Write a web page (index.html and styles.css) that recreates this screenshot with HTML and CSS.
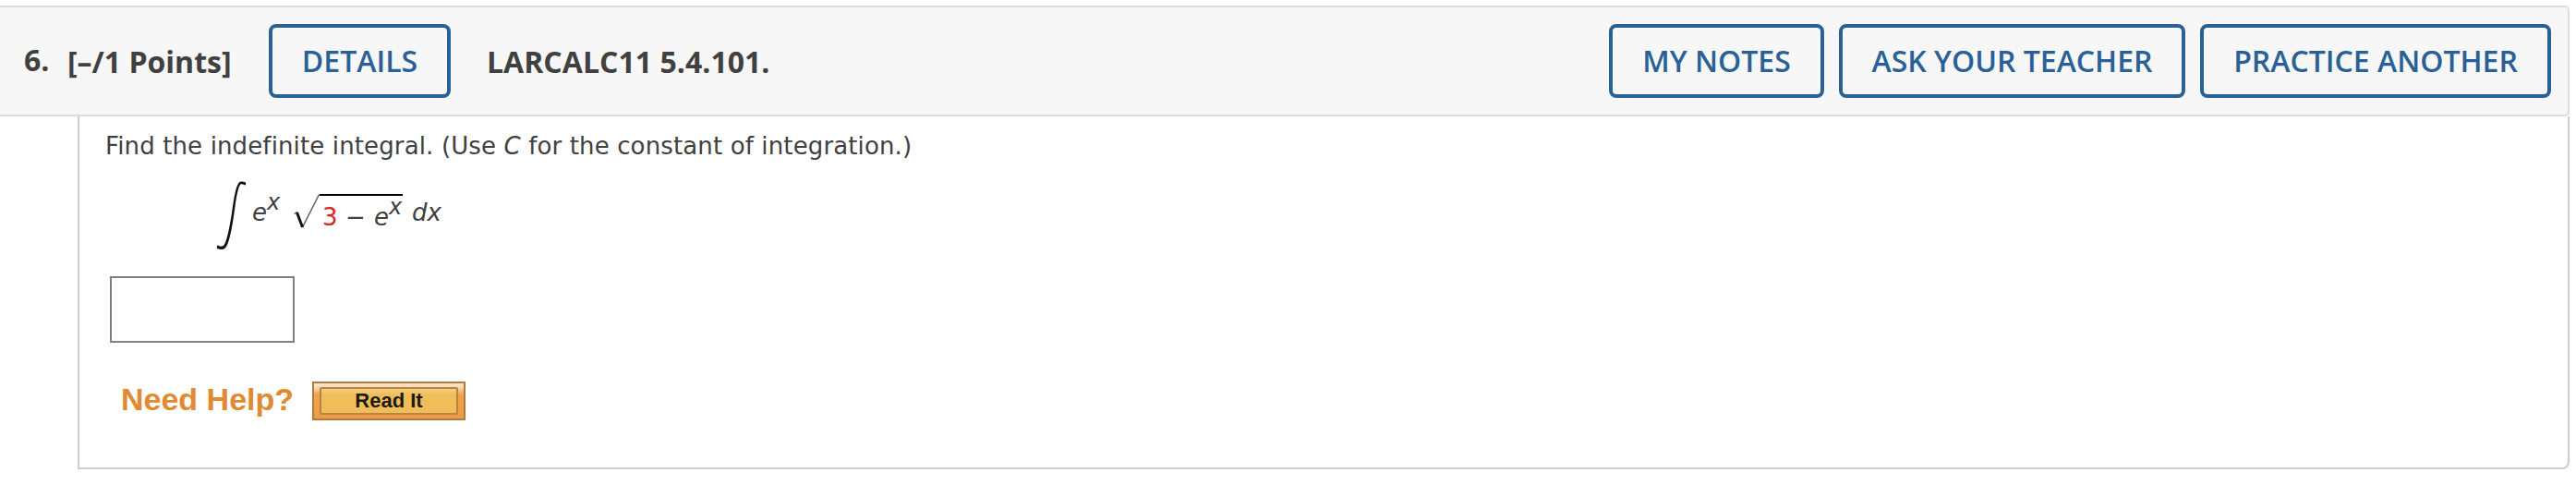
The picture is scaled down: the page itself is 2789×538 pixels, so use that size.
FILE: index.html
```html
<!DOCTYPE html>
<html lang="en">
<head>
<meta charset="utf-8">
<title>LARCALC11 5.4.101</title>
<link rel="stylesheet" href="styles.css">
</head>
<body>
<section class="question">
  <header class="question-header">
    <span class="number">6.</span>
    <span class="points">[–/1 Points]</span>
    <button class="btn details">DETAILS</button>
    <span class="source">LARCALC11 5.4.101.</span>
    <nav class="actions">
      <button class="btn notes">MY NOTES</button>
      <button class="btn ask">ASK YOUR TEACHER</button>
      <button class="btn practice">PRACTICE ANOTHER</button>
    </nav>
  </header>
  <main class="question-body">
    <p class="prompt">Find the indefinite integral. (Use <i>C</i> for the constant of integration.)</p>
    <div class="formula">
      <svg class="integral" viewBox="0 0 31 74" aria-label="integral"><path d="M31 1.5C28 .2 25 0 23.500 2C20 7 18.500 17 16.500 31C14 48 11.500 61 8.500 67.500C7 71 4 71.500 0 69.500V73C5 74.500 8 74.500 10 71C14 64 17 46 19 31C21 16 23 5.500 25.500 3.500C27 2.500 29 4 31 4.500Z"/></svg>
      <span class="term first"><i>e</i><sup>x</sup></span>
      <svg class="radical" viewBox="0 0 28 38" aria-label="square root"><path class="thin" d="M.5 21.500L4 19.500M9.500 36L27.500 .5"/><path class="thick" d="M3.500 20L9.500 36"/></svg>
      <span class="radicand"><span class="constant">3</span><span class="minus">−</span><span class="term"><i>e</i><sup>x</sup></span></span>
      <i class="term dx">dx</i>
    </div>
    <input class="answer" type="text" aria-label="Answer">
    <div class="help">
      <span class="help-label">Need Help?</span>
      <button class="read-it"><span>Read It</span></button>
    </div>
  </main>
</section>
</body>
</html>
```
FILE: styles.css
```css
* { box-sizing: border-box; }

body {
  margin: 0;
  background: #fff;
  color: #404040;
}

.question { width: 2782px; padding-top: 6px; }

.question-header {
  display: flex;
  align-items: center;
  height: 120px;
  padding: 0 18px 0 26px;
  border: 2px solid #ddd;
  border-left: 0;
  border-radius: 0 5px 5px 0;
  background: #f7f7f7;
  font: bold 32px "Open Sans", sans-serif;
  white-space: nowrap;
}

.number { width: 47px; padding-bottom: 4px; }
.points { width: 218px; }
.source { margin-left: 39px; letter-spacing: .03px; }

.btn {
  height: 80px;
  padding: 0 0 1px;
  border: 4px solid #296197;
  border-radius: 8px;
  background: transparent;
  color: #296197;
  font: 600 32px "Open Sans", sans-serif;
}

.details { width: 197px; }
.actions { display: flex; gap: 16px; margin-left: auto; }
.notes { width: 233px; }
.ask { width: 375px; }
.practice { width: 380px; }

.question-body {
  height: 382px;
  margin-left: 84px;
  padding: 14px 0 0 29px;
  border: 2px solid #ccc;
  border-top: 0;
  border-radius: 0 0 8px 0;
  font-family: Verdana, "DejaVu Sans", sans-serif;
  font-size: 26px;
}

.prompt {
  margin: 0 0 0 -1px;
  line-height: 36px;
  letter-spacing: .13px;
  white-space: nowrap;
}

.formula {
  display: flex;
  align-items: flex-start;
  height: 74px;
  margin: 20px 0 29px 120px;
  line-height: 30px;
}

.integral { width: 31px; height: 74px; fill: #111; }
.term { display: flex; }
.term i { width: 16px; }
.term sup {
  font-size: 24px;
  font-style: italic;
  line-height: 30px;
  margin-top: -11px;
}
.first { width: 45px; margin: 19px 0 0 7px; }

.radical { width: 28px; height: 38px; margin-top: 14px; fill: none; }
.thin { stroke: #555; stroke-width: 1.400; }
.thick { stroke: #111; stroke-width: 3; }

.radicand {
  display: flex;
  width: 90px;
  height: 38px;
  margin-top: 14px;
  padding: 8px 0 0 3px;
  border-top: 2px solid #000;
}
.constant { width: 25px; color: #d42a20; }
.minus { width: 31px; }
.dx { margin: 19px 0 0 10px; }

.answer {
  display: block;
  width: 200px;
  height: 72px;
  margin-left: 4px;
  border: 2px solid #808080;
  background: #fff;
  font: inherit;
}

.help {
  display: flex;
  align-items: center;
  margin: 42px 0 0 16px;
  height: 42px;
  font-family: "Liberation Sans", Arial, sans-serif;
  font-weight: bold;
}
.help-label {
  width: 207px;
  padding-bottom: 3px;
  color: #e08a32;
  font-size: 34px;
  white-space: nowrap;
}

.read-it {
  width: 166px;
  height: 42px;
  padding: 4px 6px;
  border: 2px solid #b07a3b;
  background: linear-gradient(#fae7d1, #f7d4ab 5px, #efa54e 12px, #eb9c48);
  color: #1d190c;
  font: bold 22px "Liberation Sans", Arial, sans-serif;
}
.read-it span {
  display: flex;
  align-items: center;
  justify-content: center;
  height: 30px;
  border: 2px solid #b9853e;
  border-radius: 2px;
  background: linear-gradient(#f3cf86, #f0bd5b 6px);
}
```
